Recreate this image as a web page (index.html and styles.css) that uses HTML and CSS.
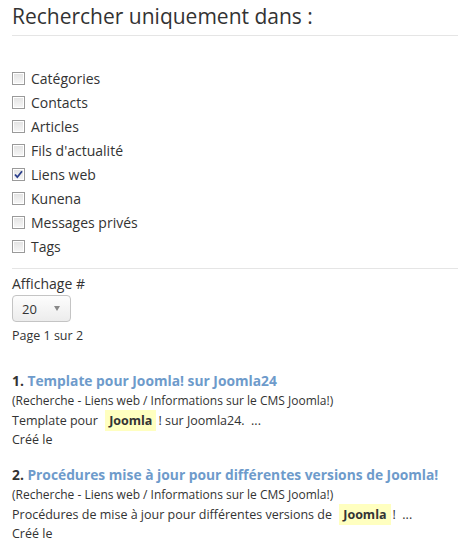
FILE: index.html
```html
<!DOCTYPE html>
<html lang="fr">
<head>
<meta charset="utf-8">
<title>Recherche</title>
<link rel="stylesheet" href="styles.css">
</head>
<body>
<div class="page">
  <fieldset class="only">
    <h2 class="legend">Rechercher uniquement dans :</h2>
    <ul class="areas">
      <li><span class="cb"></span>Catégories</li>
      <li><span class="cb"></span>Contacts</li>
      <li><span class="cb"></span>Articles</li>
      <li><span class="cb"></span>Fils d'actualité</li>
      <li><span class="cb checked"><svg viewBox="0 0 13 13" width="13" height="13"><path d="M3 6.5 L5.3 9.2 L10 3.2" fill="none" stroke="#2b3f8c" stroke-width="1.8"/></svg></span>Liens web</li>
      <li><span class="cb"></span>Kunena</li>
      <li><span class="cb"></span>Messages privés</li>
      <li><span class="cb"></span>Tags</li>
    </ul>
  </fieldset>
  <div class="limit">
    <div class="limit-label">Affichage #</div>
    <div class="select"><span>20</span><span class="arrow"></span></div>
    <div class="counter">Page 1 sur 2</div>
  </div>
  <dl class="results">
    <dt class="r-title"><span class="num">1.</span> <a href="#">Template pour Joomla! sur Joomla24</a></dt>
    <dd class="r-cat">(Recherche - Liens web / Informations sur le CMS Joomla!)</dd>
    <dd class="r-text">Template pour <span class="hl">Joomla</span>! sur Joomla24.&nbsp; ...</dd>
    <dd class="r-date">Créé le</dd>
    <dt class="r-title second"><span class="num">2.</span> <a href="#">Procédures mise à jour pour différentes versions de Joomla!</a></dt>
    <dd class="r-cat">(Recherche - Liens web / Informations sur le CMS Joomla!)</dd>
    <dd class="r-text">Procédures de mise à jour pour différentes versions de <span class="hl">Joomla</span>!&nbsp; ...</dd>
    <dd class="r-date">Créé le</dd>
  </dl>
</div>
</body>
</html>
```

FILE: styles.css
```css
html, body {
  margin: 0;
  padding: 0;
  background: #fff;
}
body {
  font-family: "Open Sans", "Liberation Sans", sans-serif;
  color: #333;
}
.page {
  padding: 0 0 0 12px;
}
.only {
  margin: 0;
  padding: 0;
  border: 0;
}
.legend {
  margin: 0;
  padding: 3px 0 5px;
  font-size: 21px;
  font-weight: 400;
  line-height: 27px;
  color: #333;
  border-bottom: 1px solid #e5e5e5;
}
.areas {
  list-style: none;
  margin: 30px 0 0;
  padding: 0 0 10px;
  border-bottom: 1px solid #e5e5e5;
}
.areas li {
  display: flex;
  align-items: center;
  height: 24px;
  font-size: 14px;
  color: #333;
}
.cb {
  width: 11px;
  height: 11px;
  border: 1px solid #9a9a9a;
  background: linear-gradient(#e2e2e2, #f7f7f7);
  box-shadow: inset 0 0 0 1px #fff;
  margin-right: 6px;
  position: relative;
  flex: none;
}
.cb svg {
  position: absolute;
  left: -1px;
  top: -1px;
}
.limit {
  padding-top: 6px;
}
.limit-label {
  font-size: 14px;
  line-height: 18px;
}
.select {
  margin-top: 2px;
  width: 59px;
  height: 27px;
  box-sizing: border-box;
  border: 1px solid #c4c4c4;
  border-radius: 4px;
  background: linear-gradient(#fdfdfd, #ececec);
  display: flex;
  align-items: center;
  justify-content: space-between;
  padding: 0 10px 0 9px;
  font-size: 13px;
  color: #333;
}
.arrow {
  width: 0;
  height: 0;
  border-left: 3px solid transparent;
  border-right: 3px solid transparent;
  border-top: 5px solid #888;
}
.counter {
  font-size: 12.5px;
  line-height: 18px;
  margin-top: 5px;
}
.results {
  margin: 26px 0 0;
  padding: 0;
}
.r-title {
  font-size: 13.8px;
  font-weight: 700;
  line-height: 20px;
  color: #333;
}
.r-title.second {
  margin-top: 16px;
}
.r-title a {
  color: #6e9bcb;
  text-decoration: none;
}
.r-cat {
  margin: 0;
  font-size: 12px;
  line-height: 20px;
}
.r-text {
  margin: 0;
  font-size: 12.5px;
  line-height: 20px;
}
.hl {
  background: #ffffc0;
  font-weight: 700;
  padding: 2px 4px;
  margin: 0 2px 0 4px;
}
.r-date {
  margin: 0;
  font-size: 12.5px;
  line-height: 18px;
}
```
